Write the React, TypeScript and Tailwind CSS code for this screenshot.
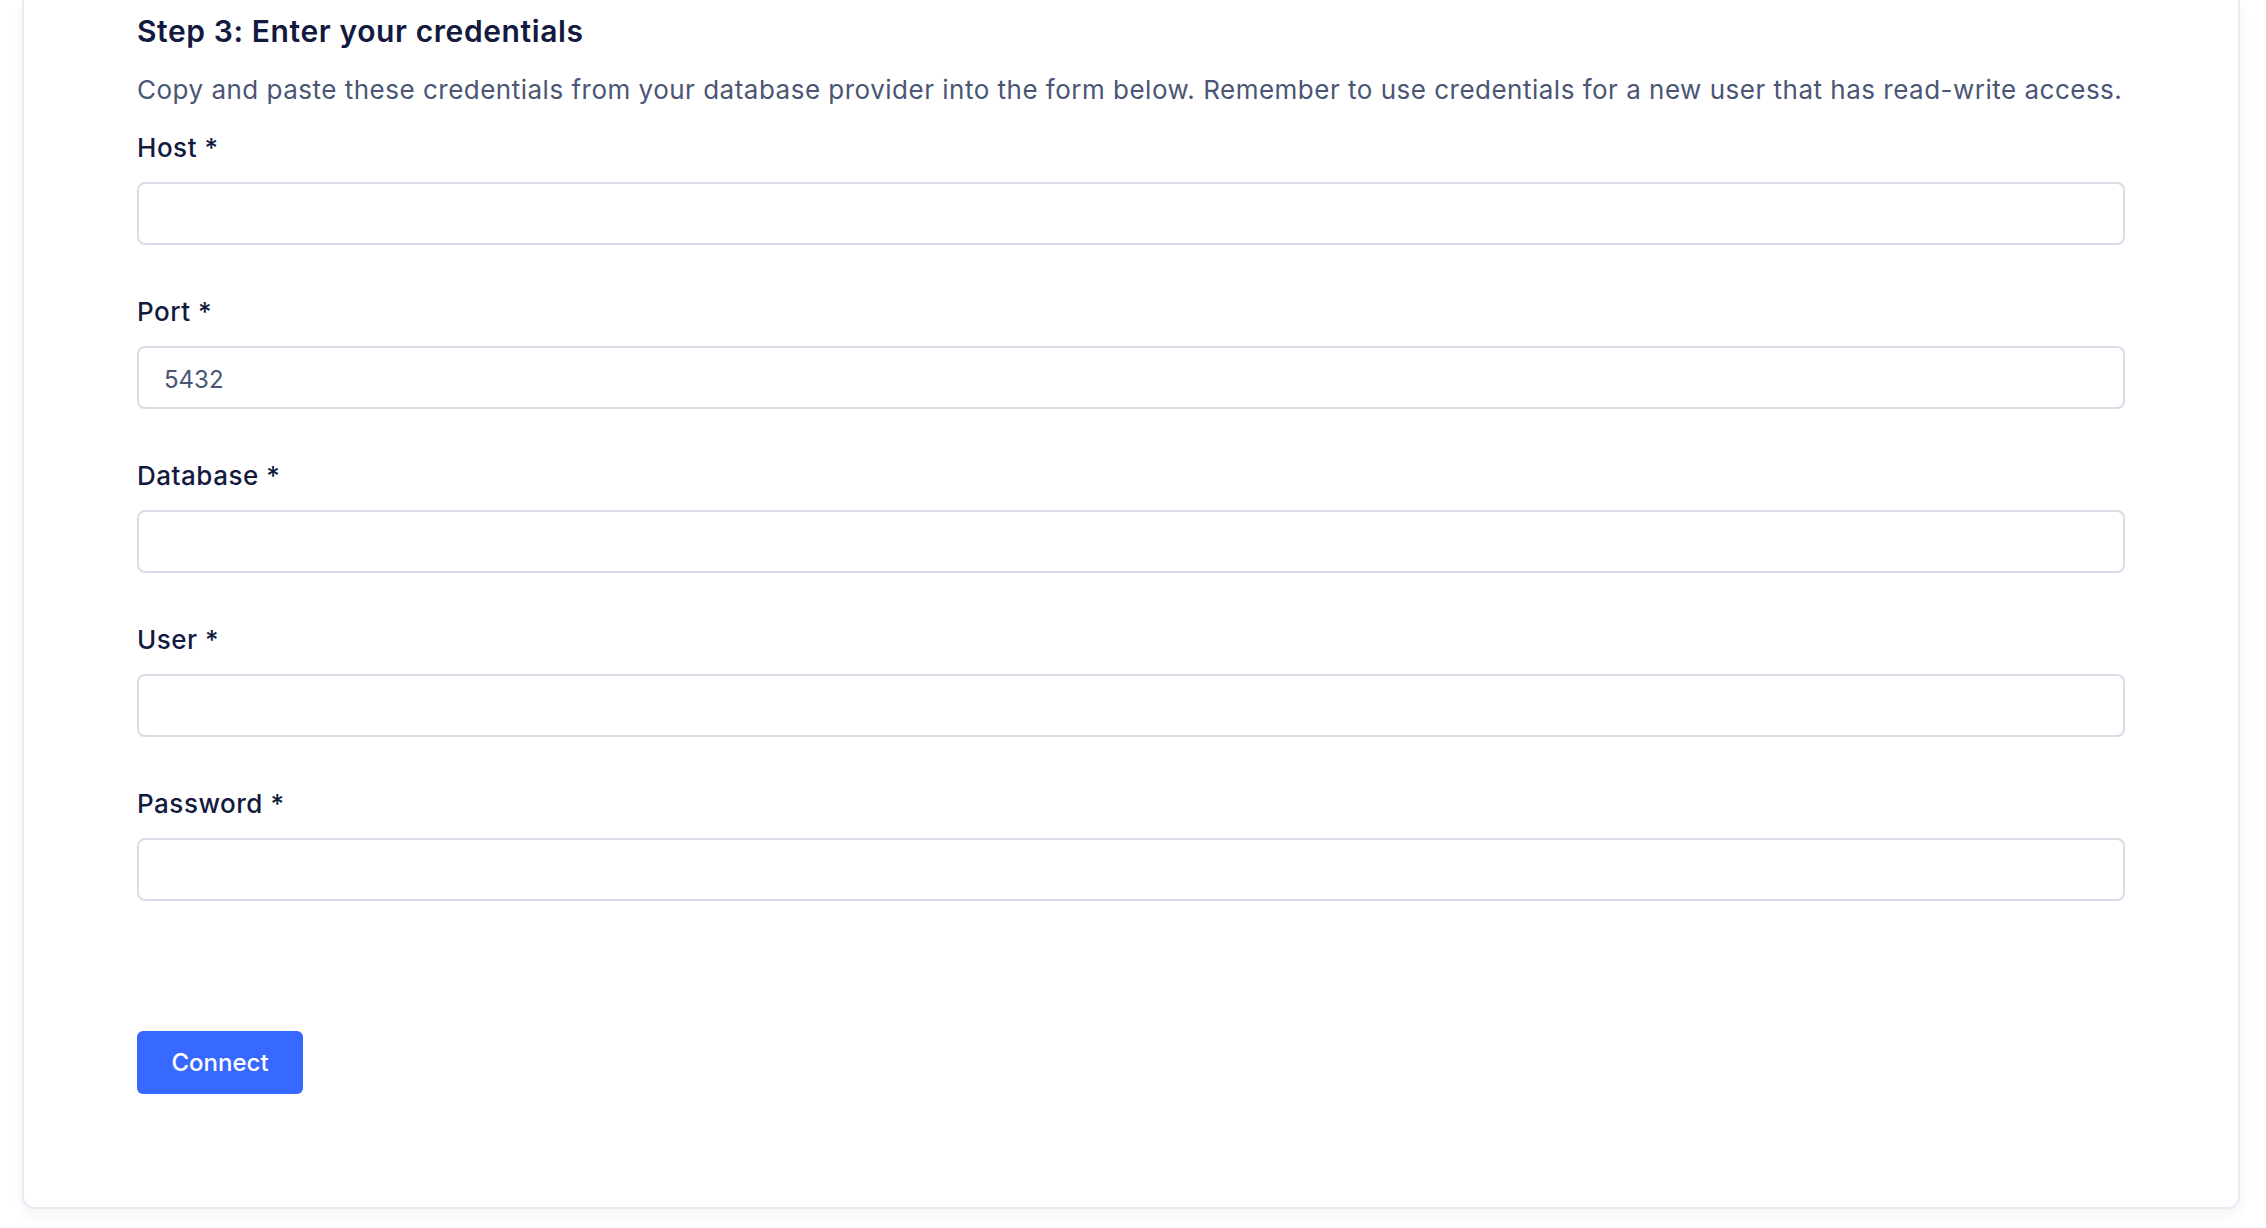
import React from "react";

const fields = [
  { label: "Host", value: "" },
  { label: "Port", value: "5432" },
  { label: "Database", value: "" },
  { label: "User", value: "" },
  { label: "Password", value: "" },
];

export default function App() {
  return (
    <div
      className="min-h-screen w-full bg-white pb-[22px]"
      style={{ fontFamily: "Inter, 'Noto Sans', sans-serif" }}
    >
      <div className="ml-[22px] mr-[26px] rounded-b-[12px] border-2 border-t-0 border-[#e6ecf5] bg-white px-[113px] pt-[13px] pb-[113px] shadow-[0_6px_14px_rgba(30,40,80,0.05)]">
        <h2 className="text-[30px] leading-[36px] font-semibold tracking-[0.02em] text-[#131a40]">
          Step 3: Enter your credentials
        </h2>
        <p className="mt-[23px] whitespace-nowrap text-[26px] leading-[36px] tracking-[0.019em] text-[#4b5575]">
          Copy and paste these credentials from your database provider into the form below. Remember to use credentials for a new user that has read-write access.
        </p>
        <div className="mt-[22px] flex flex-col gap-[49px]">
          {fields.map((f) => (
            <div key={f.label} className="flex flex-col">
              <label className="text-[26px] leading-[36px] font-medium tracking-[0.02em] text-[#131a40]">
                {f.label} *
              </label>
              <input
                type={f.label === "Password" ? "password" : "text"}
                defaultValue={f.value}
                className="mt-[16px] h-[63px] w-full rounded-[8px] border-2 border-[#d9dbe9] bg-white px-[25px] pt-[3px] text-[24px] text-[#4b5575] outline-none"
                style={{ fontFamily: "Inter, 'Noto Sans', sans-serif" }}
              />
            </div>
          ))}
        </div>
        <button className="mt-[130px] h-[63px] w-[166px] rounded-[6px] bg-[#3768ff] text-[24px] leading-[63px] font-medium text-white">
          Connect
        </button>
      </div>
    </div>
  );
}
